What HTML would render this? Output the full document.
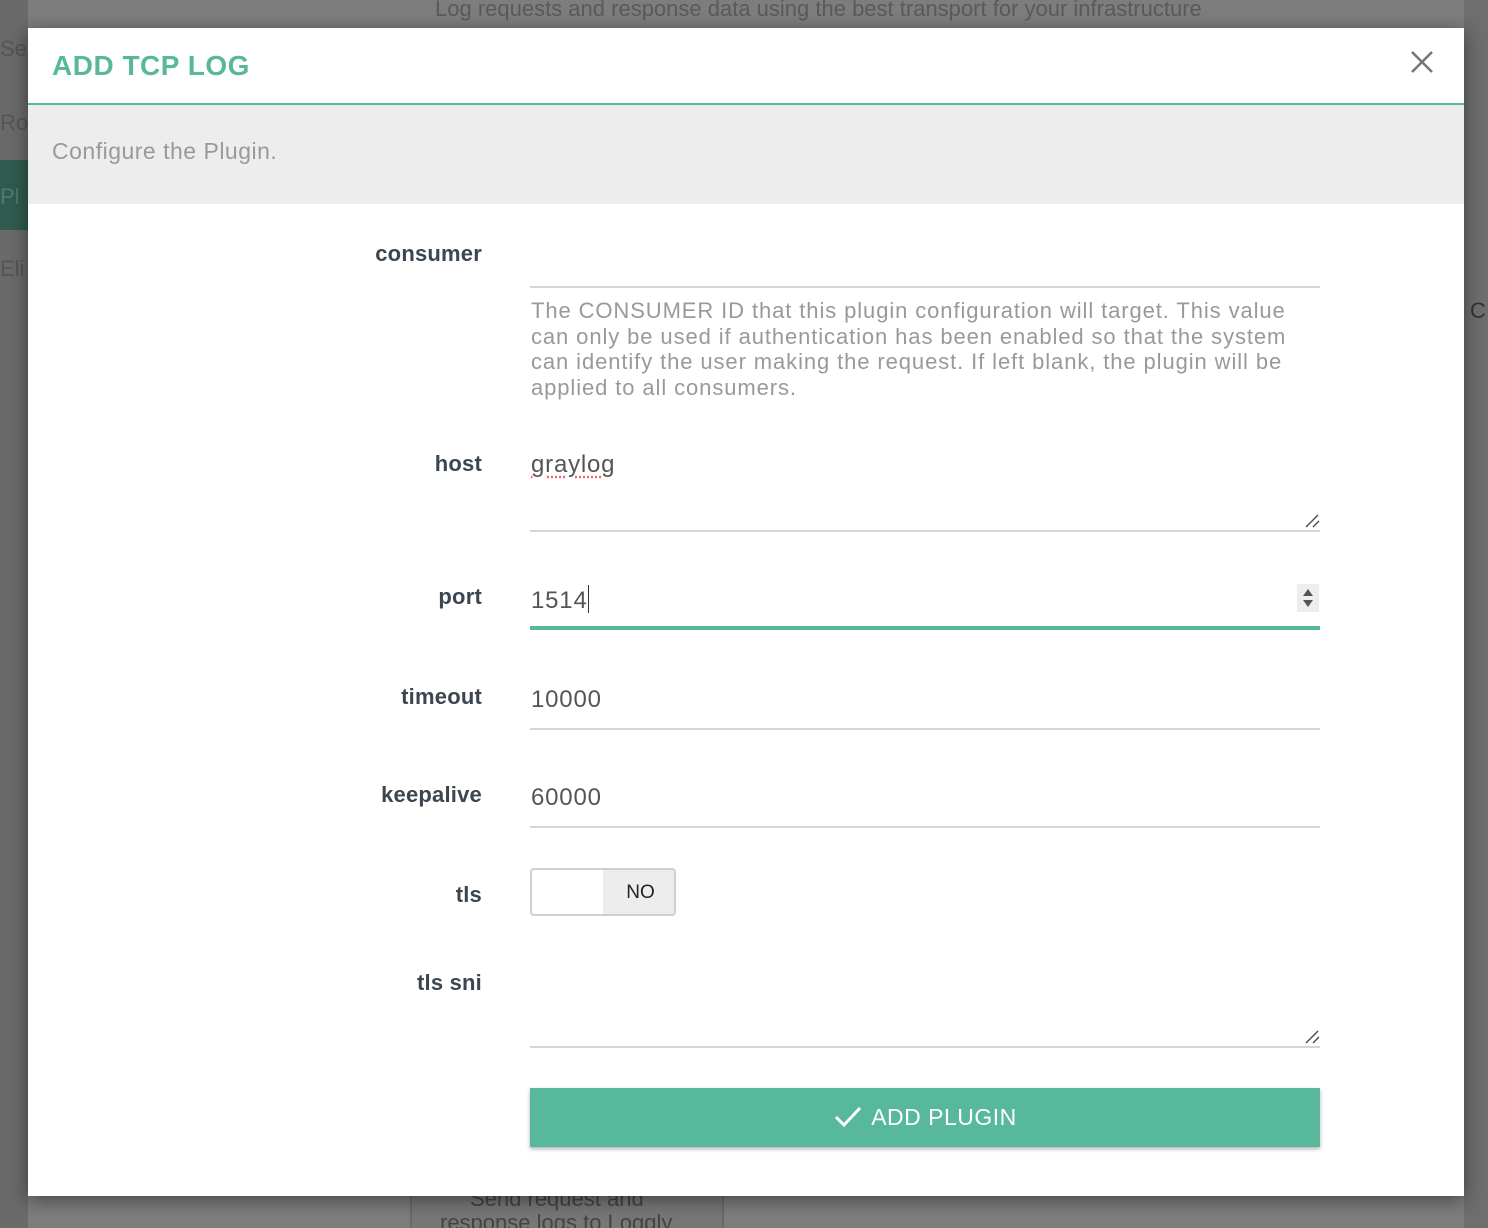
<!DOCTYPE html>
<html><head><meta charset="utf-8">
<style>
*{box-sizing:border-box;margin:0;padding:0}
html,body{width:1488px;height:1228px;overflow:hidden}
body{background:#7d7d7d;font-family:"Liberation Sans",sans-serif;position:relative}
.bgtext{position:absolute;color:#555;font-size:22px}
.modal{position:absolute;left:28px;top:28px;width:1436px;height:1168px;background:#fff;box-shadow:0 4px 18px rgba(0,0,0,.45)}
.head{height:77px;border-bottom:2px solid #57b89c;position:relative}
.head h1{position:absolute;left:24px;top:22px;font-size:28px;font-weight:bold;color:#57b89c;letter-spacing:.5px}
.close{position:absolute;right:30px;top:22px}
.sub{height:99px;background:#ededed;padding:33px 24px;font-size:23px;color:#999;letter-spacing:.5px}
.lbl{position:absolute;right:982px;font-size:22px;color:#3b4650;font-weight:bold;text-align:right;letter-spacing:.2px}
.field{position:absolute;left:502px;width:790px;border-bottom:2px solid #d6d6d6}
.val{position:absolute;left:503px;font-size:24px;color:#555;letter-spacing:.8px}
.help{position:absolute;left:503px;top:270px;width:820px;font-size:22px;line-height:25.5px;color:#999;letter-spacing:.9px;white-space:nowrap}
.grip{position:absolute;right:0;bottom:2px}
.btn{position:absolute;left:502px;top:1060px;width:790px;height:59px;background:#57b89c;box-shadow:0 2px 4px rgba(0,0,0,.3);color:#fff;font-size:23px;text-align:center;line-height:59px;letter-spacing:.5px}
</style></head><body>
<div class="bgtext" style="left:435px;top:-4px;color:#5a5a5a">Log requests and response data using the best transport for your infrastructure</div>
<div style="position:absolute;left:0;top:0;width:28px;height:1228px;background:#6a6a6a"></div>
<div style="position:absolute;left:0;top:160px;width:28px;height:70px;background:#2f5c4f"></div>
<div class="bgtext" style="left:0;top:36px">Se</div>
<div class="bgtext" style="left:0;top:110px">Ro</div>
<div class="bgtext" style="left:0;top:184px;color:#4f7a6d">Pl</div>
<div class="bgtext" style="left:0;top:256px">Eli</div>
<div style="position:absolute;left:1464px;top:0;width:24px;height:1228px;background:#6e6e6e"></div>
<div class="bgtext" style="left:1470px;top:298px;color:#333">C</div>
<div style="position:absolute;left:410px;top:1196px;width:314px;height:40px;background:#777;border-left:2px solid #6a6a6a;border-right:2px solid #6a6a6a"></div>
<div class="bgtext" style="left:470px;top:1186px;color:#444">Send request and</div>
<div class="bgtext" style="left:440px;top:1210px;color:#444">response logs to Loggly</div>

<div class="modal">
 <div class="head"><h1>ADD TCP LOG</h1>
  <svg class="close" width="24" height="24" viewBox="0 0 24 24"><path d="M2 2L22 22M22 2L2 22" stroke="#777" stroke-width="2.6"/></svg></div>
 <div class="sub">Configure the Plugin.</div>

 <div class="lbl" style="top:213px">consumer</div>
 <div class="field" style="top:222px;height:38px"></div>
 <div class="help">The CONSUMER ID that this plugin configuration will target. This value<br>can only be used if authentication has been enabled so that the system<br>can identify the user making the request. If left blank, the plugin will be<br>applied to all consumers.</div>

 <div class="lbl" style="top:423px">host</div>
 <div class="val" style="top:423px;text-decoration:underline dotted #e66;text-underline-offset:4px">graylog</div>
 <div class="field" style="top:420px;height:84px"><svg class="grip" width="16" height="14" viewBox="0 0 16 14"><path d="M2 13L14 1M9 13L15 7" stroke="#444" stroke-width="1.3"/></svg></div>

 <div class="lbl" style="top:556px">port</div>
 <div class="val" style="top:557px">1514<span style="display:inline-block;width:1.5px;height:28px;background:#333;vertical-align:-5px"></span></div>
 <div class="field" style="top:540px;height:62px;border-bottom:4px solid #57b89c"></div>
 <div style="position:absolute;left:1269px;top:556px;width:22px;height:28px;background:#eee"><svg width="22" height="28" viewBox="0 0 22 28"><path d="M6 12L11 5L16 12Z M6 16L16 16L11 23Z" fill="#555"/></svg></div>

 <div class="lbl" style="top:656px">timeout</div>
 <div class="val" style="top:658px">10000</div>
 <div class="field" style="top:640px;height:62px"></div>

 <div class="lbl" style="top:754px">keepalive</div>
 <div class="val" style="top:756px">60000</div>
 <div class="field" style="top:738px;height:62px"></div>

 <div class="lbl" style="top:854px">tls</div>
 <div style="position:absolute;left:502px;top:840px;width:146px;height:48px;border:2px solid #d0d0d0;border-radius:4px;overflow:hidden;background:#fff">
  <div style="position:absolute;left:71px;top:0;width:75px;height:46px;background:#ededed;text-align:center;line-height:46px;font-size:19px;color:#222">NO</div></div>

 <div class="lbl" style="top:942px">tls sni</div>
 <div class="field" style="top:940px;height:80px"><svg class="grip" width="16" height="14" viewBox="0 0 16 14"><path d="M2 13L14 1M9 13L15 7" stroke="#444" stroke-width="1.3"/></svg></div>

 <div class="btn"><svg width="30" height="24" viewBox="0 0 30 24" style="vertical-align:-4px;margin-right:8px"><path d="M3 12L11 20L27 3" stroke="#fff" stroke-width="3" fill="none"/></svg>ADD PLUGIN</div>
</div>
</body></html>
